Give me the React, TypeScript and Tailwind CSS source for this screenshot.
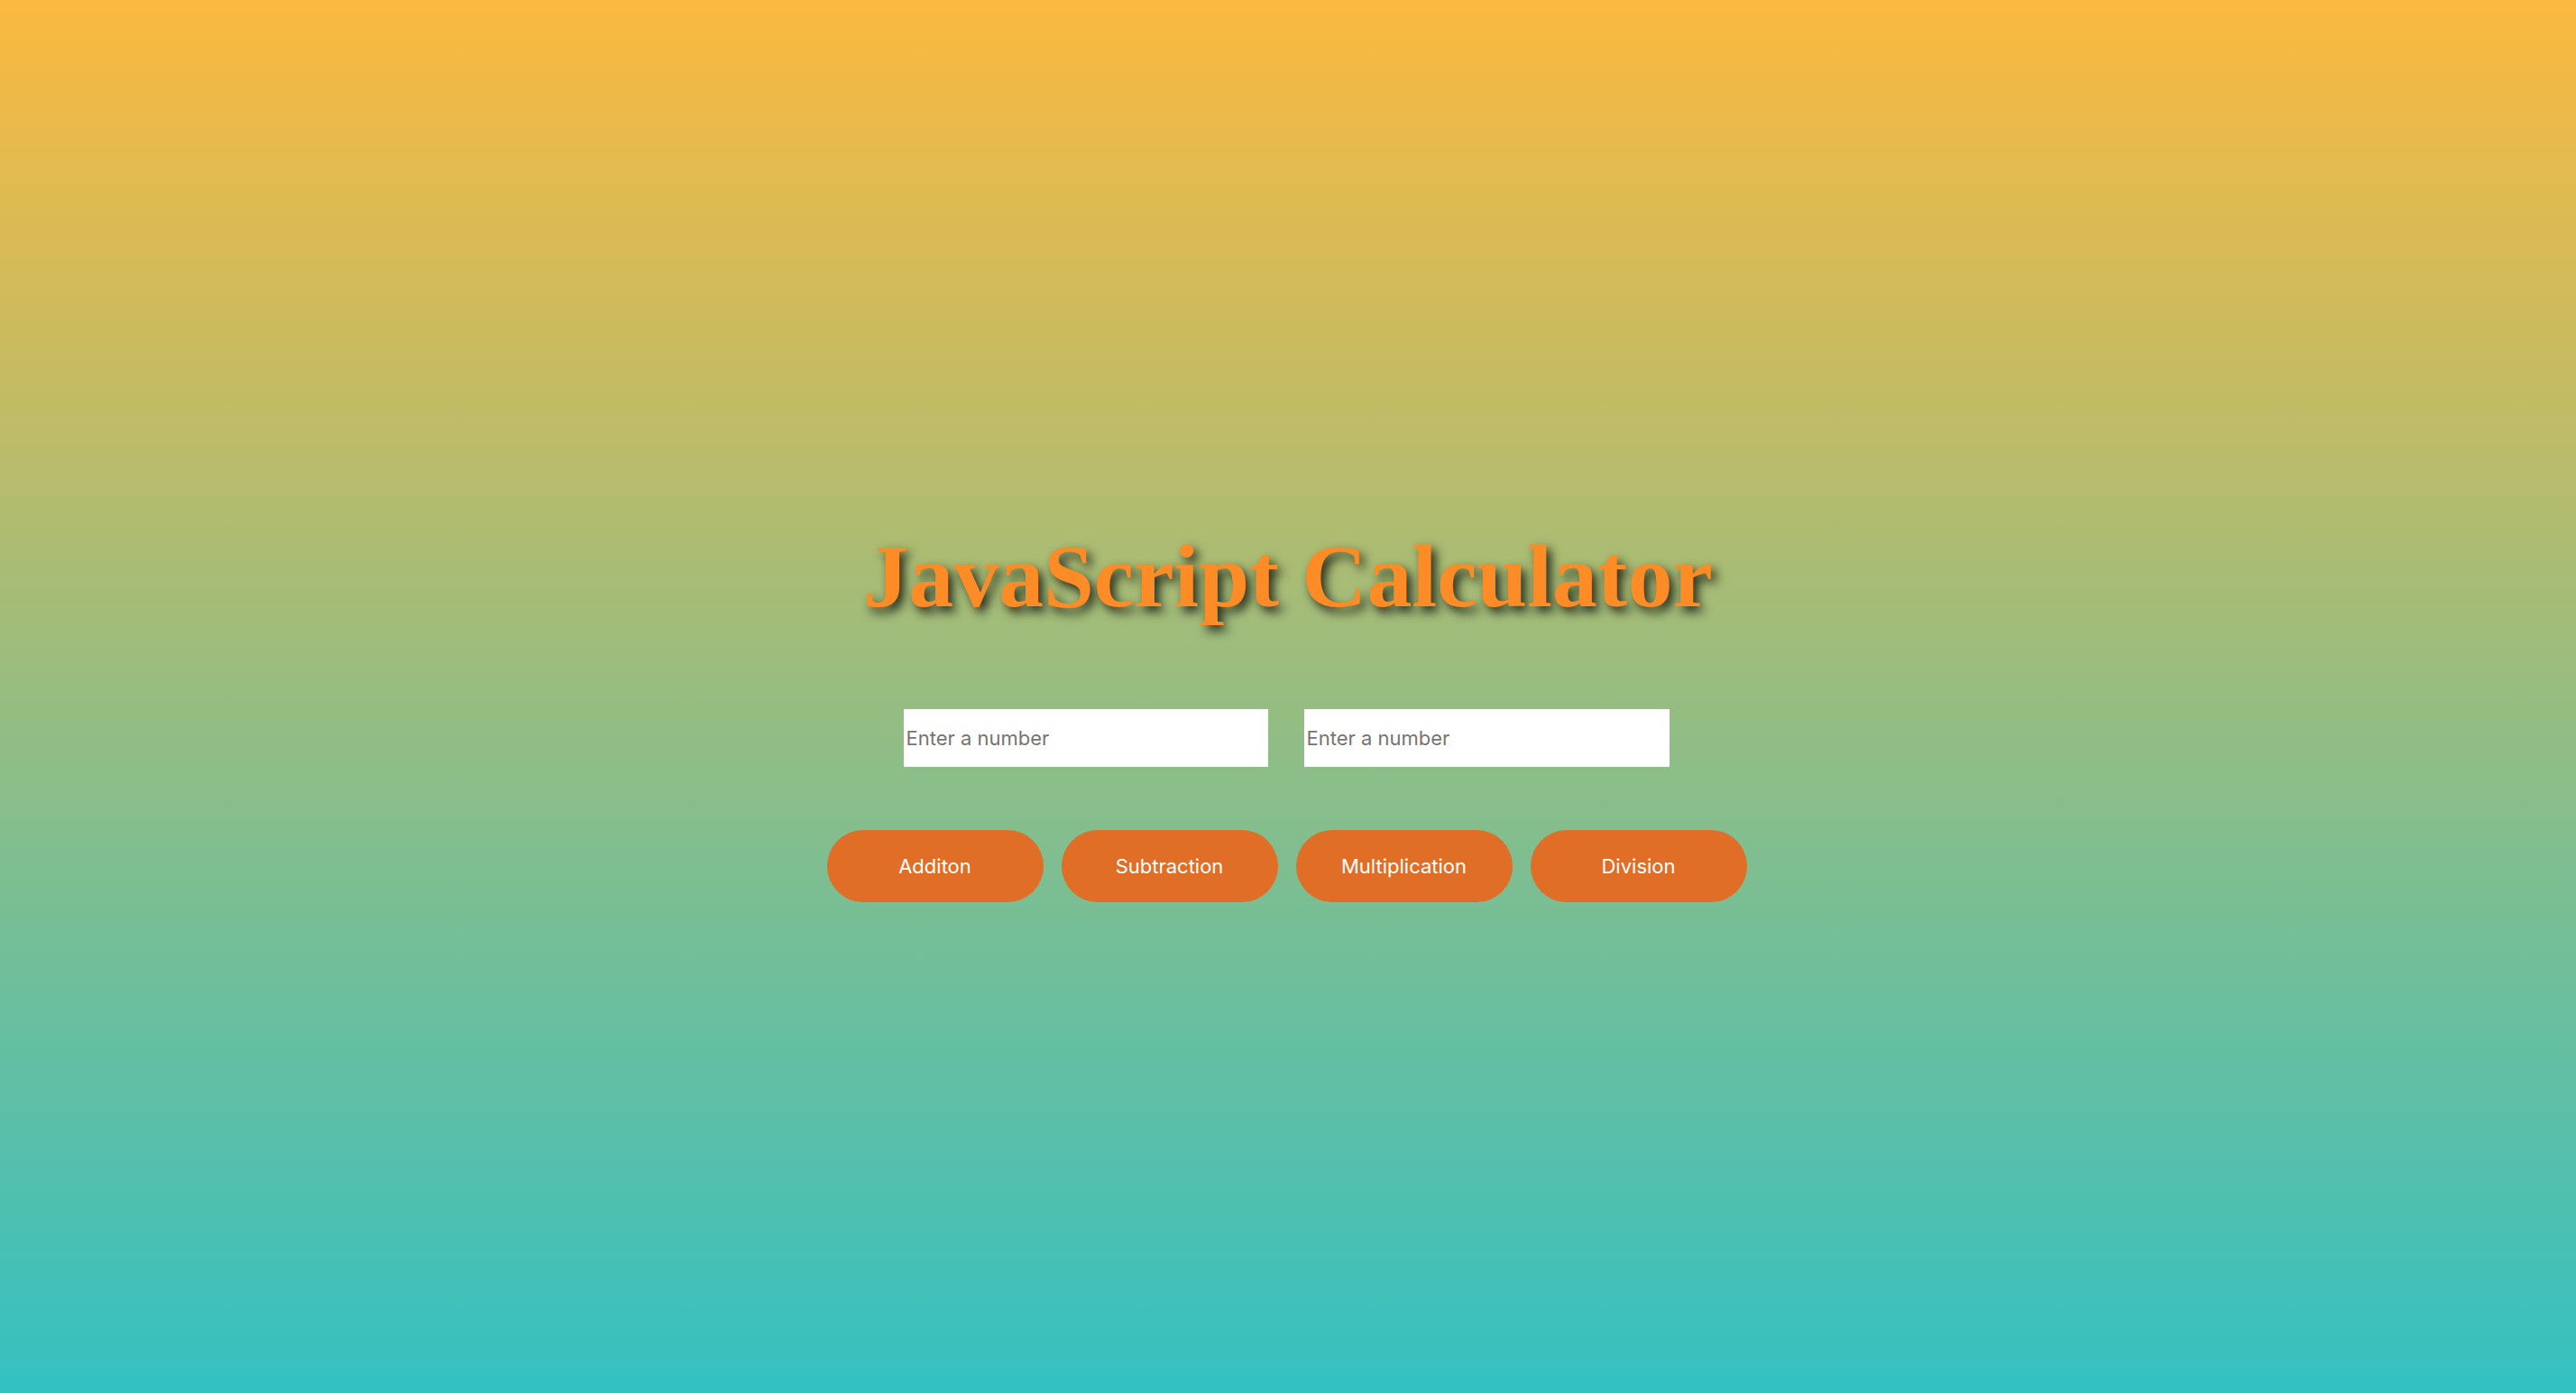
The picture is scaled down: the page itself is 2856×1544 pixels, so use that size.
import React from "react";

export default function App() {
  const ops = ["Additon", "Subtraction", "Multiplication", "Division"];
  return (
    <div className="min-h-screen w-full bg-linear-to-b/srgb from-[#fbb93f] to-[#33c1c2] flex flex-col items-center pt-[581px] pb-[200px]">
      <h1 className="font-['Liberation_Serif',serif] font-bold text-[100px] leading-[115px] text-[#fd8b26] text-center [text-shadow:5px_6px_12px_rgba(0,0,0,0.8)]">
        JavaScript Calculator
      </h1>
      <div className="flex gap-[40px] mt-[90px] ml-[-4px]">
        <input
          type="text"
          placeholder="Enter a number"
          className="w-[404px] h-[64px] bg-white px-[3px] text-[22px] font-['Inter',sans-serif] text-[#333] placeholder:text-[#757575] outline-none"
        />
        <input
          type="text"
          placeholder="Enter a number"
          className="w-[405px] h-[64px] bg-white px-[3px] text-[22px] font-['Inter',sans-serif] text-[#333] placeholder:text-[#757575] outline-none"
        />
      </div>
      <div className="flex gap-[20px] mt-[70px] ml-[-3px]">
        {ops.map((op) => (
          <button
            key={op}
            className="w-[240px] h-[80px] rounded-full bg-[#e06e26] text-white text-[22px] font-['Inter',sans-serif]"
          >
            {op}
          </button>
        ))}
      </div>
    </div>
  );
}
